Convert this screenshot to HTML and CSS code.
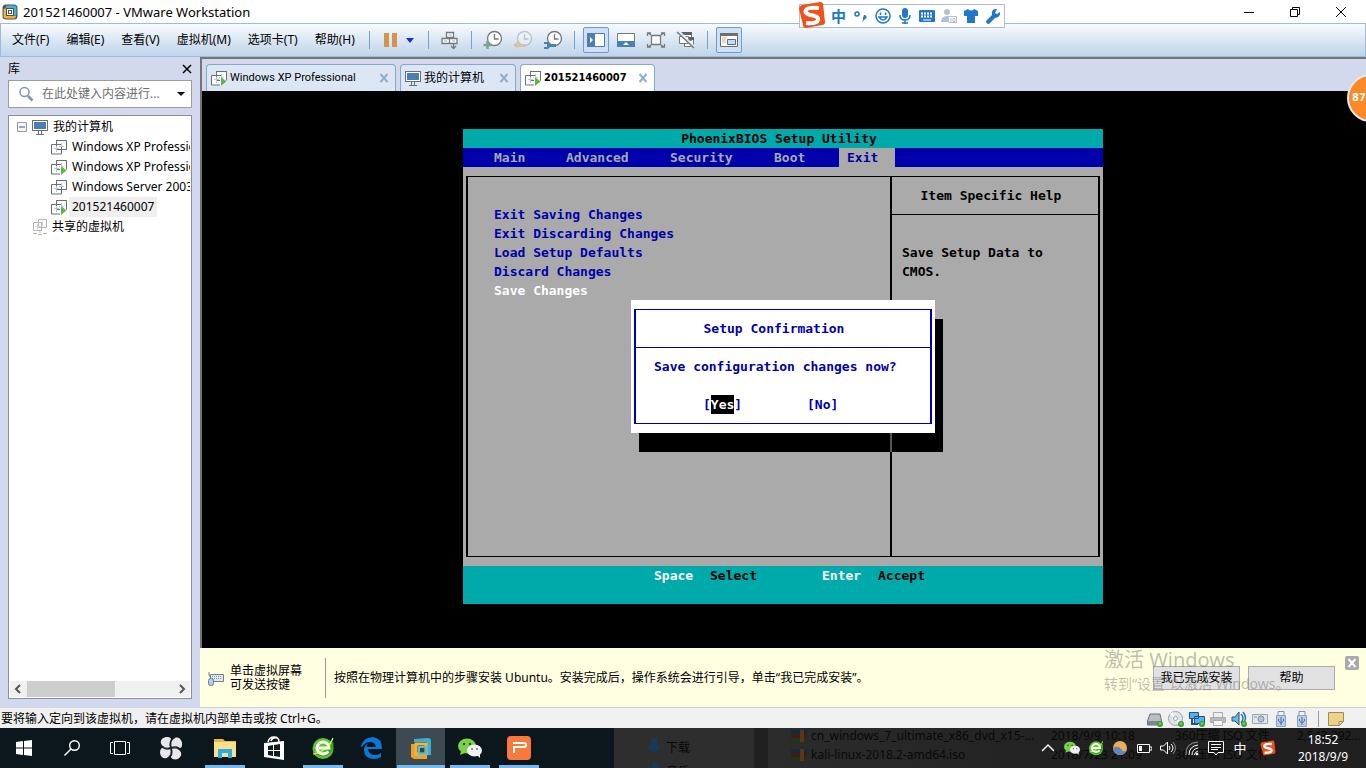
FILE: index.html
```html
<!DOCTYPE html>
<html lang="zh-CN">
<head>
<meta charset="utf-8">
<title>201521460007 - VMware Workstation</title>
<link rel="stylesheet" href="styles.css">
</head>
<body>
<svg class="defs" aria-hidden="true">
  <symbol id="vmlogo" viewBox="0 0 16 16">
    <rect x="0.5" y="0.5" width="15" height="15" rx="3.5" fill="#51504a"/>
    <path d="M5 1.500h7.500q2 0 2 2V11H12V5H3.500q0-3.500 1.500-3.500z" fill="#3fb5d6"/>
    <path d="M1.500 5.500Q1.500 4 4.500 4.500V11.500H14q0 3-2 3H4Q1.500 14.500 1.500 12z" fill="#efb13e"/>
    <rect x="4.500" y="4.500" width="7" height="7" fill="#fff" stroke="#51504a"/>
    <rect x="6.500" y="6.500" width="3" height="3" fill="#fff" stroke="#555"/>
  </symbol>
  <symbol id="vm" viewBox="0 0 16 16">
    <path d="M5.500 5V1.500h10v9H12M.500 5.500h10v9.500H.500z" fill="#fff" stroke="#6f6f6f"/>
    <path d="M5.500 10.500v-9h10v9z" fill="none" stroke="#6f6f6f"/>
    <path d="M5.500 7v6M3 9.500h5M8 7.500h5M10.500 4v4" stroke="#b3c5df" fill="none"/>
  </symbol>
  <symbol id="vmon" viewBox="0 0 16 16">
    <use href="#vm"/><path d="M9 6 16 11v1l-6 4H9z" fill="#fff"/><path d="M10 7v9l5.500-4.500z" fill="#57b947"/>
  </symbol>
  <symbol id="pc" viewBox="0 0 16 16">
    <rect x=".5" y="1.500" width="15" height="10" fill="#fff" stroke="#6f6f6f"/><rect x="2" y="3" width="12" height="7" fill="#4a7fb5"/>
    <path d="M6.500 12v3M9.500 12v3M4 15.500h8" stroke="#6f6f6f"/>
  </symbol>
  <symbol id="shared" viewBox="0 0 14 16">
    <path d="M5.500.5h8v8h-8zM.5 3.500h8v8h-8zM7 12v2M0 14.500h4M5 15.500h4M10 14.500h4" fill="none" stroke="#b5b5b5"/>
    <path d="M4.500 5v5M2.500 7.500h5M9.500 2.500v5" stroke="#ccd5e4"/>
  </symbol>
  <symbol id="x" viewBox="0 0 10 10"><path d="m1.500 1 7 8M8.500 1l-7 8" stroke="currentColor" stroke-width="2" fill="none"/></symbol>
  <symbol id="clock" viewBox="0 0 20 20">
    <circle cx="11.500" cy="8.500" r="7" fill="#fff" stroke="#77797b" stroke-width="1.400"/><path d="M11.500 4v5h4" fill="none" stroke="#77797b" stroke-width="1.400"/>
  </symbol>
  <symbol id="wechat" viewBox="0 0 24 20">
    <ellipse cx="9" cy="8" rx="9" ry="7.500" fill="#7bd149"/><path d="m3 13-1 4 5-2z" fill="#7bd149"/>
    <circle cx="6" cy="6" r="1.200" fill="#285a17"/><circle cx="12" cy="6" r="1.200" fill="#285a17"/>
    <ellipse cx="16.500" cy="12.500" rx="7.500" ry="6" fill="#f1f3f2"/><path d="m19 17 3 3v-4z" fill="#f1f3f2"/>
    <circle cx="14" cy="11" r="1" fill="#777"/><circle cx="19" cy="11" r="1" fill="#777"/>
  </symbol>
  <symbol id="green-e" viewBox="0 0 24 24">
    <circle cx="12" cy="12.500" r="10.500" fill="#5cc62b"/><path d="M3 17C9 20 18 15 22 5q2 7-3 13-7 6-16-1z" fill="#3fa31b"/>
    <path d="M17.500 15.500Q15 18 12 18a6 6 0 1 1 6-6H8" fill="none" stroke="#fff" stroke-width="3"/>
    <path d="M2 18C8 18 19 11 22 2" fill="none" stroke="#e3ff85" stroke-width="1.200"/>
  </symbol>
  <symbol id="sogou" viewBox="0 0 28 28">
    <path d="M4 4 22 1q3 0 3 2l2 18q0 3-3 3L8 27q-3 0-3-3L1 8q0-3 3-4z" fill="#f1501b"/>
    <path d="M21 7Q10 6 8 9t4 5q9 1 8 5t-12 3" fill="none" stroke="#fff" stroke-width="4"/>
  </symbol>
  <symbol id="dot" viewBox="0 0 6 6"><circle cx="3" cy="3" r="3" fill="#3c9d2e"/><circle cx="3" cy="2.500" r="1.500" fill="#6bcf50"/></symbol>
  <symbol id="usb" viewBox="0 0 12 16">
    <path d="M3 .5h6v4H3z" fill="#eef1f5" stroke="#8794a5"/><path d="M1.500 4.500h9v11h-9z" fill="#b9cce4" stroke="#8ea2bd"/>
    <path d="M6 6v8M3.500 8v2L6 12l2.500-2V8" fill="none" stroke="#456da0"/>
  </symbol>
  <symbol id="archive" viewBox="0 0 16 12">
    <path d="M0 0h16v4H0z" fill="#122c3e"/><path d="M0 4h16v4H0z" fill="#401c18"/><path d="M0 8h16v4H0z" fill="#1e3518"/><path d="M9 0h4v12H9z" fill="#54391d"/>
  </symbol>
</svg>

<header class="titlebar">
  <svg class="i16"><use href="#vmlogo"/></svg>
  <h1 class="title">201521460007 - VMware Workstation</h1>
  <div class="window-buttons">
    <button aria-label="最小化"><svg class="i12" viewBox="0 0 12 12"><path d="M1 6.500h10" stroke="#000"/></svg></button>
    <button aria-label="还原"><svg class="i12" viewBox="0 0 12 12" fill="none" stroke="#000"><path d="M1.500 3.500h7v7h-7zM3.500 3V1.500h7v7H9"/></svg></button>
    <button aria-label="关闭"><svg class="i12" viewBox="0 0 12 12"><path d="m1 1 10 10M11 1 1 11" stroke="#000"/></svg></button>
  </div>
</header>

<div class="menubar">
  <nav class="menus">
    <button>文件(F)</button><button>编辑(E)</button><button>查看(V)</button><button>虚拟机(M)</button><button>选项卡(T)</button><button>帮助(H)</button>
  </nav>
  <div class="tools">
    <span class="sep"></span>
    <button aria-label="挂起"><svg class="i20" viewBox="0 0 20 20"><path d="M3 3h5v14H3zM11 3h5v14h-5z" fill="#d3924d"/></svg></button>
    <button class="caret" aria-label="电源选项"><svg class="i8" viewBox="0 0 8 8"><path d="M0 2h8L4 7z" fill="#1c2ddb"/></svg></button>
    <span class="sep"></span>
    <button aria-label="发送 Ctrl+Alt+Del"><svg class="i20" viewBox="0 0 20 20" fill="#fff" stroke="#77797b" stroke-width="1.300"><path d="M6.500 2.500h7v5h-7zM2 8.500h7.500v5H2zM9.500 8.500H17v5H9.500z"/><path d="M4 11h3M12 11h3M8.500 5h3" stroke="#b5c9e6"/><path d="M13.500 14v4.500M11 16l2.500 2.500L16 16" fill="none"/></svg></button>
    <span class="sep"></span>
    <button aria-label="拍摄快照"><svg class="i20" viewBox="0 0 20 20"><use href="#clock"/><path d="M4.500 11v8M.5 15h8" stroke="#7da48c" stroke-width="2.500"/></svg></button>
    <button aria-label="恢复快照"><svg class="i20" viewBox="0 0 20 20"><g opacity=".35"><use href="#clock"/></g><path d="m0 15 5-4v3h8v3H5v2z" fill="#dcc0a1"/></svg></button>
    <button aria-label="管理快照"><svg class="i20" viewBox="0 0 20 20"><use href="#clock"/><path d="M1 12h4l2 2h6v3H7l-2 2H1v-2h3v-3H1z" fill="#4a7fb5"/></svg></button>
    <span class="sep"></span>
    <button class="on" aria-label="显示库"><svg class="i20" viewBox="0 0 20 20"><path d="M1.500 3.500h17v13h-17z" fill="#fff" stroke="#4f7fb0"/><path d="M1 3h8v14H1z" fill="#4a7fb5"/><path d="m4 7 3 3-3 3z" fill="#fff"/></svg></button>
    <button aria-label="显示缩略图"><svg class="i20" viewBox="0 0 20 20"><path d="M1.500 3.500h17v13h-17z" fill="#fff" stroke="#77797b"/><path d="M1 11h18v6H1z" fill="#4a7fb5"/><path d="m7 15 3-3 3 3z" fill="#fff"/></svg></button>
    <button aria-label="全屏"><svg class="i20" viewBox="0 0 20 20" fill="none" stroke="#77797b" stroke-width="1.300"><path d="M5.500 5.500h9v9h-9z" fill="#fff"/><path d="M1.500 6V3H5M15 3h3.500v3M1.500 14v3H5M15 17h3.500v-3M2 3l3 2M18 3l-3 2M2 17l3-2M18 17l-3-2"/></svg></button>
    <button aria-label="Unity"><svg class="i20" viewBox="0 0 20 20" fill="#fff" stroke="#77797b"><path d="M5.500 2.500h10v8h-10zM8.500 7.500h9v9h-9z"/><path d="M5 2h11v3H5zM13 7h5v3h-5z" fill="#5f6366" stroke="none"/><path d="M3.500 6.500h9v7h-9z"/><path d="m2 1 16 16" stroke="#e0eaf6" stroke-width="3"/><path d="m1 2 17 16" stroke-width="1.500"/></svg></button>
    <span class="sep"></span>
    <button class="on" aria-label="控制台视图"><svg class="i20" viewBox="0 0 20 20"><path d="M1.500 3.500h17v13h-17z" fill="#fff" stroke="#6f6f6f"/><path d="M1 3h18v3H1z" fill="#6f6f6f"/><path d="M3 8h4M3 10h4M3 12h4" stroke="#dcb36f"/><path d="M8.500 9.500h8v5h-8z" fill="#c9d9ee" stroke="#4f6f97"/></svg></button>
  </div>
</div>

<div class="workspace">
  <aside class="sidebar">
    <div class="side-head"><h2>库</h2><button aria-label="关闭库"><svg class="i10" viewBox="0 0 10 10"><path d="m1 1 8 8M9 1 1 9" stroke="#000" stroke-width="1.500"/></svg></button></div>
    <div class="search">
      <svg class="i16" viewBox="0 0 16 16" fill="none" stroke="#8093b9"><circle cx="6.500" cy="6" r="4.500" stroke-width="1.500"/><path d="m10 10 4.500 4.500" stroke-width="2.500"/></svg>
      <input type="text" aria-label="搜索库" placeholder="在此处键入内容进行...">
      <button aria-label="搜索选项"><svg class="i8" viewBox="0 0 8 8"><path d="M0 2h8L4 6z"/></svg></button>
    </div>
    <div class="tree-box">
      <ul class="tree">
        <li class="root"><svg class="i10" viewBox="0 0 10 10"><path d="M.5.5h9v9h-9z" fill="#f6f6f6" stroke="#9a9a9a"/><path d="M2 5h6" stroke="#3b53a0"/></svg><svg class="i16"><use href="#pc"/></svg><span>我的计算机</span></li>
        <li class="child"><svg class="i16"><use href="#vm"/></svg><span>Windows XP Professional</span></li>
        <li class="child"><svg class="i16"><use href="#vmon"/></svg><span>Windows XP Professional</span></li>
        <li class="child"><svg class="i16"><use href="#vm"/></svg><span>Windows Server 2003</span></li>
        <li class="child selected"><svg class="i16"><use href="#vmon"/></svg><span>201521460007</span></li>
        <li class="common"><svg class="i16"><use href="#shared"/></svg><span>共享的虚拟机</span></li>
      </ul>
      <div class="scrollbar">
        <svg class="i10" viewBox="0 0 10 10"><path d="M7 1 3 5l4 4" fill="none" stroke="#555" stroke-width="2"/></svg>
        <span class="track"><span class="thumb"></span></span>
        <svg class="i10" viewBox="0 0 10 10"><path d="m3 1 4 4-4 4" fill="none" stroke="#555" stroke-width="2"/></svg>
      </div>
    </div>
  </aside>

  <main class="main">
    <div class="tabs">
      <div class="tab tab-wide"><svg class="i16"><use href="#vmon"/></svg><span>Windows XP Professional</span><button aria-label="关闭选项卡"><svg class="i10"><use href="#x"/></svg></button></div>
      <div class="tab"><svg class="i16"><use href="#pc"/></svg><span class="cn">我的计算机</span><button aria-label="关闭选项卡"><svg class="i10"><use href="#x"/></svg></button></div>
      <div class="tab active"><svg class="i16"><use href="#vmon"/></svg><span>201521460007</span><button aria-label="关闭选项卡"><svg class="i10"><use href="#x"/></svg></button></div>
    </div>
    <div class="screen">
      <section class="bios">
        <h2 class="bios-title">PhoenixBIOS Setup Utility</h2>
        <nav class="bios-menu"><button>Main</button><button>Advanced</button><button>Security</button><button>Boot</button><button class="current">Exit</button></nav>
        <div class="bios-body">
          <div class="bios-frame">
            <ul class="bios-list"><li>Exit Saving Changes</li><li>Exit Discarding Changes</li><li>Load Setup Defaults</li><li>Discard Changes</li><li class="picked">Save Changes</li></ul>
            <div class="bios-help"><h3>Item Specific Help</h3><p>Save Setup Data to CMOS.</p></div>
          </div>
        </div>
        <footer class="bios-foot"><b>Space</b><span>Select</span><b>Enter</b><span>Accept</span></footer>
        <div class="dialog-shadow"><i></i></div>
        <div class="dialog" role="dialog" aria-labelledby="confirm">
          <div class="dialog-frame">
            <h3 id="confirm">Setup Confirmation</h3>
            <p>Save configuration changes now?</p>
            <div class="choices"><span>[<button class="yes">Yes</button>]</span><span>[<button>No</button>]</span></div>
          </div>
        </div>
      </section>
    </div>
    <div class="notice">
      <svg class="i16" viewBox="0 0 16 16"><path d="M2.500 4.500h13v7h-13z" fill="#dfe7ef" stroke="#73808c"/><path d="M4 6.500h10M4 8.500h10" stroke="#8a98a7" stroke-dasharray="1 1"/><rect x=".5" y="8.500" width="5" height="7" rx="2" fill="#b6cce4" stroke="#657d98"/><path d="M1 2v3l2 3" fill="none" stroke="#777"/></svg>
      <p class="hint">单击虚拟屏幕<br>可发送按键</p>
      <p class="message">按照在物理计算机中的步骤安装 Ubuntu。安装完成后，操作系统会进行引导，单击“我已完成安装”。</p>
      <button class="push">我已完成安装</button>
      <button class="push">帮助</button>
      <button class="dismiss" aria-label="关闭提示"><svg class="i10"><use href="#x"/></svg></button>
      <div class="watermark"><strong>激活 Windows</strong><span>转到“设置”以激活 Windows。</span></div>
    </div>
  </main>
</div>

<div class="status">
  <p>要将输入定向到该虚拟机，请在虚拟机内部单击或按 Ctrl+G。</p>
  <div class="devices">
    <svg class="i16" viewBox="0 0 16 16"><path d="m3 3-2.500 7v4h14v-4L13 3z" fill="#b9bec4" stroke="#686f77"/><path d="M1 10h14v4H1z" fill="#7d858f"/><use href="#dot" x="10" y="10" width="6" height="6"/></svg>
    <svg class="i16" viewBox="0 0 16 16"><circle cx="7.500" cy="7.500" r="7" fill="#dfe4e9" stroke="#98a0a8"/><path d="M7.500 7.500 2 3l3-2zM7.500 7.500l6 3-3 3z" fill="#fff"/><circle cx="7.500" cy="7.500" r="2" fill="#fff" stroke="#8aa2bb"/><use href="#dot" x="10" y="10" width="6" height="6"/></svg>
    <svg class="i16" viewBox="0 0 16 16"><path d="M.5 1.500h9v6h-9zM5.500 5.500h10v7h-10z" fill="#55b1ef" stroke="#1e5487"/><path d="M3 8v5h6" fill="none" stroke="#1e5487" stroke-width="2"/><use href="#dot" x="10" y="10" width="6" height="6"/></svg>
    <svg class="i16" viewBox="0 0 16 16"><path d="M3.500 1.500h9v5h-9z" fill="#eee" stroke="#aaa"/><path d="M.5 6.500h15v5H.5z" fill="#bbb" stroke="#aaa"/><path d="M3.500 9.500h9v5h-9z" fill="#f5f5f5" stroke="#aaa"/></svg>
    <svg class="i16" viewBox="0 0 16 16"><path d="M1 6h3l4-5v13L4 10H1z" fill="#6ab7eb" stroke="#29557d"/><path d="M10 3q4 4 0 9M12 1q5 6 0 12" fill="none" stroke="#2676b4" stroke-width="1.500"/><use href="#dot" x="10" y="10" width="6" height="6"/></svg>
    <svg class="i16" viewBox="0 0 16 16"><path d="M.5 3.500h15v9H.5z" fill="#e1e6ec" stroke="#9aa6b3"/><circle cx="9" cy="8" r="3" fill="#b4c2d2" stroke="#7d8fa5"/><path d="M2 6h3" stroke="#8998aa"/></svg>
    <svg class="i16"><use href="#usb"/></svg>
    <svg class="i16"><use href="#usb"/></svg>
    <span class="line"></span>
    <svg class="i16" viewBox="0 0 16 16"><path d="M.5 1.500h15v9l-4 4H.5z" fill="#edd28b" stroke="#a48a50"/><path d="M15 10.500h-4v4z" fill="#fff2c8" stroke="#a48a50"/></svg>
  </div>
</div>

<footer class="taskbar">
  <div class="ghost" aria-hidden="true">
    <div class="ghost-nav"><svg class="i16" viewBox="0 0 16 16"><path d="M5 0h6v8h5l-8 7-8-7h5z" fill="#173b56"/></svg><span>下载</span><svg class="i16" viewBox="0 0 16 16"><path d="M7 0h2l5 6h-4v8H5z" fill="#173b56"/></svg><span>音乐</span></div>
    <div class="ghost-files">
      <div><svg class="i16"><use href="#archive"/></svg><span>cn_windows_7_ultimate_x86_dvd_x15-...</span><span>2018/9/9 10:18</span><span>360压缩 ISO 文件</span><span>2,543,292...</span></div>
      <div><svg class="i16"><use href="#archive"/></svg><span>kali-linux-2018.2-amd64.iso</span><span>2018/7/23 21:09</span><span>360压缩 ISO 文件</span><span></span></div>
    </div>
  </div>
  <nav class="apps">
    <button class="sys" aria-label="开始"><svg class="i16" viewBox="0 0 16 16"><path d="m0 2 7-1v6.500H0zM8 1l8-1v7.500H8zM0 8.500h7V15l-7-1zM8 8.500h8V16l-8-1z" fill="#fff"/></svg></button>
    <button class="sys" aria-label="搜索"><svg class="i16" viewBox="0 0 16 16" fill="none" stroke="#fff" stroke-width="1.400"><circle cx="10.500" cy="5.500" r="4.800"/><path d="M7 9 .5 15.500"/></svg></button>
    <button class="sys" aria-label="任务视图"><svg class="i20" viewBox="0 0 20 20" fill="none" stroke="#fff"><path d="M4.500 3.500h11v13h-11zM3 4.500H.5v11H3M17 4.500h2.500v11H17"/></svg></button>
    <button class="app first" aria-label="风扇"><svg class="i24" viewBox="0 0 24 24"><g fill="#e8e8eb"><path d="M11 11.500C0 13-1 2 7 1q7-1 5 7zM12.500 11C11-1 22-1 23 7q1 7-7 5zM13 12.500c11-1 12 9 4 11q-7 0-5-7zM11.500 13C13 24 2 25 1 17q0-7 7-5z"/></g><path d="M1 8q4 7 11 4M16 1q-7 4-4 11M23 16q-4-7-11-4M8 23q7-4 4-11" fill="none" stroke="#182029" stroke-width="1.500"/></svg></button>
    <button class="app open" aria-label="文件资源管理器"><svg class="i24" viewBox="0 0 24 24"><path d="M1 3h9l2 2h11v16H1z" fill="#e9b548"/><path d="M1 6h22v15H1z" fill="#ffe08a"/><path d="M5 22v-9h14v9h-4v-5H9v5z" fill="#28aee8"/></svg></button>
    <button class="app" aria-label="应用商店"><svg class="i24" viewBox="0 0 24 24"><path d="m2 7 20-2v19L2 21z" fill="#fff"/><path d="M6 6q1-5 6-5t5 5M9 5q1-4 6-3" fill="none" stroke="#fff" stroke-width="1.500"/><path d="m6 10 5-1v5H6zM12 9l6-1v6h-6zM6 15h5v5l-5-1zM12 15h6v6l-6-1z" fill="#111d22"/></svg></button>
    <button class="app open" aria-label="360浏览器"><svg class="i24"><use href="#green-e"/></svg></button>
    <button class="app" aria-label="Edge"><svg class="i24" viewBox="0 0 24 24"><path d="M1 11Q3 1 13 1q9 1 9 12H8q1 6 7 6 4 0 6-2v4q-3 2-8 2-9-1-9-9 0-5 5-7-3 2-2 4h9q-1-5-6-5-5 0-8 5z" fill="#0a78d7"/></svg></button>
    <button class="app focused" aria-label="VMware Workstation"><svg class="i24" viewBox="0 0 24 24"><path d="M5 3 19 2q3 0 3 3v14h-4V6H5z" fill="#3eaed0"/><path d="M2 8h4v10h12v5H5l-3-2z" fill="#e8a32b"/><path d="M7 8h10v10H7z" fill="#41403e" stroke="#f0b53f" stroke-width="3"/><path d="M10 11h7v7h-7z" fill="none" stroke="#50c0db" stroke-width="2"/></svg></button>
    <button class="app open" aria-label="微信"><svg class="i24"><use href="#wechat"/></svg></button>
    <button class="app open" aria-label="WPS 演示"><svg class="i24" viewBox="0 0 24 24"><rect width="24" height="24" rx="4" fill="#f9793c"/><path d="M7 17v-6h10q2 0 2-2t-2-2H6" fill="none" stroke="#fff" stroke-width="2"/></svg></button>
  </nav>
  <div class="tray">
    <svg class="i16" viewBox="0 0 16 16"><path d="m2 11 6-6 6 6" fill="none" stroke="#fff" stroke-width="1.500"/></svg>
    <svg class="i16"><use href="#wechat"/></svg>
    <svg class="i16"><use href="#green-e"/></svg>
    <svg class="i16" viewBox="0 0 16 16"><circle cx="8" cy="8" r="7" fill="#e9ae58"/><path d="M1 8q5-3 8 1t6 1q-2 5-7 5-6 0-7-7z" fill="#6485bd"/></svg>
    <svg class="i16" viewBox="0 0 16 16"><path d="M1.500 4.500h12v8h-12zM14 7h2v3h-2" fill="none" stroke="#fff"/><path d="M3 6h3v5H3z" fill="#fff"/></svg>
    <svg class="i16" viewBox="0 0 16 16" fill="none" stroke="#fff"><path d="M.5 6h3l4-4v12l-4-4h-3z"/><path d="M9 6q2 2 0 4M11 4q4 4 0 8"/><path d="M13 2q5 6 0 12" stroke="#888"/></svg>
    <svg class="i16" viewBox="0 0 16 16" fill="none" stroke="#fff"><path d="M8 15q0-6 6-7M5 15Q5 6 14 5M10.500 15q0-3 3.500-4"/><path d="M2 15Q1 3 14 2" stroke="#999"/><circle cx="13" cy="14" r="1" fill="#fff"/></svg>
    <svg class="i16" viewBox="0 0 16 16"><path d="M.5 1.500h15v11H10L8 15l-2-2.500H.5zM3 4.500h10M3 7.500h10M3 9.500h7" fill="none" stroke="#fff"/></svg>
    <span class="ime">中</span>
    <svg class="i16"><use href="#sogou"/></svg>
    <time>18:52<br>2018/9/9</time>
  </div>
</footer>

<div class="ime-bar">
  <svg class="ime-logo"><use href="#sogou"/></svg>
  <span>中</span>
  <svg class="i16" viewBox="0 0 16 16"><circle cx="4" cy="6" r="2" fill="none" stroke="#2277c8" stroke-width="1.500"/><path d="M11 7a2 2 0 1 1 1 4q-1 2-3 3 2-2 1-4z" fill="#2277c8"/></svg>
  <svg class="i16" viewBox="0 0 16 16" fill="none" stroke="#2277c8" stroke-width="1.500"><circle cx="8" cy="8" r="7"/><path d="M4 9q4 6 8 0zM5.500 4.500V7M10.500 4.500V7"/></svg>
  <svg class="i16" viewBox="0 0 16 16"><rect x="5" y="0" width="6" height="10" rx="3" fill="#2277c8"/><path d="M3 7q0 5 5 5t5-5M8 12v4M5 15h6" fill="none" stroke="#2277c8" stroke-width="1.500"/></svg>
  <svg class="i16" viewBox="0 0 16 16"><rect y="2" width="16" height="12" rx="1" fill="#2277c8"/><path d="M2 5.500h12M2 8.500h12" stroke="#fff" stroke-width="2" stroke-dasharray="2 1"/><path d="M4 12h8" stroke="#fff"/></svg>
  <svg class="i16" viewBox="0 0 16 16"><circle cx="6" cy="4" r="3" fill="#b4bfd8"/><path d="M0 14q0-6 6-6t6 6z" fill="#b4bfd8"/><path d="M7.500 8.500h8v6h-8z" fill="#fff" stroke="#b4bfd8"/><path d="M10 10v4M12 10.500h2v3h-2z" fill="none" stroke="#b4bfd8"/></svg>
  <svg class="i16" viewBox="0 0 16 16"><path d="m1 3 4-2q3 3 6 0l4 2v5h-3v7H4V8H1z" fill="#2277c8"/></svg>
  <svg class="i16" viewBox="0 0 16 16"><path d="m1 13 6-6q-1-5 3-6l2 0-2 4 2 1 3-2q1 5-5 6l-6 6q-3 0-3-3z" fill="#2277c8"/></svg>
</div>
<div class="speed">87</div>
</body>
</html>
```

FILE: styles.css
```css
* { box-sizing: border-box; }
body { margin: 0; height: 100vh; display: flex; flex-direction: column; position: relative; overflow: hidden; background: #fff; color: #000; font: 12px/20px "Noto Sans", "Noto Sans CJK SC", sans-serif; }
button { font: inherit; color: inherit; background: none; border: 0; padding: 0; }
h1, h2, h3, p, ul { margin: 0; padding: 0; font-size: inherit; font-weight: inherit; }
ul { list-style: none; }
svg { display: block; flex: none; }
.defs { position: absolute; width: 0; height: 0; }
.i8 { width: 8px; height: 8px; }
.i10 { width: 10px; height: 10px; }
.i12 { width: 12px; height: 12px; }
.i16 { width: 16px; height: 16px; }
.i20 { width: 20px; height: 20px; }
.i24 { width: 24px; height: 24px; }

.titlebar { flex: none; height: 23px; display: flex; align-items: center; gap: 5px; padding: 0 2px; }
.title { flex: 1; font-size: 13px; }
.window-buttons { display: flex; }
.window-buttons button { width: 46px; height: 24px; display: grid; place-items: center; }

.menubar { flex: none; height: 34px; display: flex; border: 1px solid #9dbcdd; background: linear-gradient(#f9fbfd, #dbe7f4 50%, #bfd4ea); }
.menus { min-width: 368px; display: flex; gap: 17px; padding-left: 11px; align-items: center; white-space: nowrap; }
.tools { display: flex; align-items: center; }
.tools button { width: 30px; height: 26px; display: grid; place-items: center; }
.tools .caret { width: 16px; justify-items: start; }
.tools .on { width: 26px; margin: 0 2px; border: 1px solid #6e9bd0; border-radius: 2px; background: #cfe0f6; }
.tools .sep { width: 1px; height: 18px; background: #7ba0cc; margin-right: 6px; }
.tools button + .sep { margin-left: 6px; }

.workspace { flex: 1; min-height: 0; display: flex; background: #d3d9ed; }
.sidebar { flex: none; width: 200px; padding: 1px 8px 9px; display: flex; flex-direction: column; }
.side-head { height: 22px; display: flex; justify-content: space-between; align-items: center; }
.side-head button { display: grid; }
.search { height: 28px; display: flex; align-items: center; border: 1px solid #9c9c9c; background: #fff; padding: 0 6px 0 9px; }
.search input { flex: 1; min-width: 0; border: 0; outline: 0; padding: 0 0 0 8px; font: inherit; color: #6d6d6d; }
.search input::placeholder { color: #6d6d6d; opacity: 1; }
.tree-box { flex: 1; margin-top: 7px; border: 1px solid #8a8fa0; background: #fff; display: flex; flex-direction: column; justify-content: space-between; overflow: hidden; padding: 1px; }
.tree { overflow: hidden; white-space: nowrap; }
.tree li { display: flex; align-items: center; height: 20px; }
.root { gap: 5px; padding-left: 7px; }
.child { gap: 2px; padding-left: 41px; }
.child span { padding: 0 3px; }
.selected span { background: #efefef; }
.common { gap: 4px; padding-left: 22px; }
.scrollbar { display: flex; align-items: center; gap: 4px; height: 16px; padding: 0 3px; background: #f0f0f0; }
.track { flex: 1; height: 100%; }
.thumb { display: block; width: 60%; height: 100%; background: #cdcdcd; }

.main { flex: 1; min-width: 0; display: flex; flex-direction: column; border-top: 2px solid #747474; }
.tabs { flex: none; height: 32px; padding: 5px 0 0 4px; display: flex; gap: 4px; border-left: 2px solid #747474; }
.tab { min-width: 116px; display: flex; align-items: center; gap: 3px; padding: 0 6px 0 4px; border: 1px solid #86a9c9; border-bottom: 0; border-radius: 4px 4px 0 0; background: #dce7f5; font-size: 11px; font-family: Roboto, "Noto Sans CJK SC", sans-serif; }
.tab .cn { font-size: 12px; }
.tab-wide { width: 190px; }
.tab button { margin-left: auto; color: #8fb0cd; }
.tab.active { min-width: 135px; background: #fff; font: bold 11px/20px "DejaVu Sans Condensed", "DejaVu Sans", sans-serif; }
.screen { flex: 1; min-height: 0; display: grid; place-items: center; padding: 0 2px 6px 0; background: #000; border-left: 2px solid #747474; }

.bios { position: relative; width: 640px; background: #aaa; font: bold 13px/19px "DejaVu Sans Mono", monospace; }
.bios-title { background: #0aa; text-align: center; padding-right: 8px; }
.bios-menu { display: grid; grid-template-columns: 72px 104px 104px 65px 56px; padding-left: 31px; background: #00a; color: #aaa; }
.bios-menu button { text-align: left; }
.bios-menu .current { background: #aaa; color: #00a; padding-left: 8px; }
.bios-body { padding: 9px 3px; }
.bios-frame { display: flex; min-height: 381px; border: solid #000; border-width: 1px 2px; }
.bios-list { flex: 1; padding: 28px 0 0 26px; color: #00a; }
.picked { color: #fff; }
.bios-help { width: 208px; border-left: 2px solid #000; }
.bios-help h3 { padding: 9px 8px 9px 0; border-bottom: 1px solid #000; text-align: center; }
.bios-help p { padding: 28px 10px; }
.bios-foot { display: grid; grid-template-columns: 56px 112px 56px 80px; height: 38px; padding-left: 191px; background: #0aa; }
.bios-foot b { color: #fff; }
.dialog { position: absolute; left: 168px; top: 171px; width: 304px; padding: 9px 3px; background: #fff; color: #00a; }
.dialog-shadow { position: absolute; left: 176px; top: 190px; width: 304px; height: 133px; padding-left: 251px; background: #000; }
.dialog-shadow i { display: block; width: 2px; height: 100%; background: #555; }
.dialog-frame { border: solid #00a; border-width: 1px 2px; }
.dialog h3 { padding: 9px 18px 9px 0; text-align: center; border-bottom: 1px solid #00a; }
.dialog p { padding: 9px 18px 19px; }
.choices { display: grid; grid-template-columns: 104px 80px; padding: 0 0 9px 67px; }
.choices .yes { background: #000; color: #fff; }

.notice { position: relative; flex: none; height: 60px; display: flex; align-items: center; padding: 0 7px 0 8px; background: #ffffe1; border-bottom: 1px solid #d0d0d0; }
.hint { width: 96px; margin: 0 8px 0 6px; border-right: 1px solid #9a9a9a; line-height: 14px; padding: 6px 0; }
.message { flex: 1; }
.push { width: 87px; height: 24px; margin-right: 8px; border: 1px solid #adadad; background: #e1e1e1; }
.dismiss { align-self: flex-start; width: 14px; height: 14px; margin: 8px 0 0 2px; display: grid; place-items: center; background: #a9a9a9; color: #fff; border-radius: 2px; }
.watermark { position: absolute; right: 16px; top: 0; width: 246px; color: rgba(110, 110, 110, .45); pointer-events: none; }
.watermark strong { display: block; font-size: 20px; line-height: 24px; font-weight: normal; }
.watermark span { display: block; font-size: 14px; line-height: 24px; }

.status { flex: none; height: 20px; display: flex; align-items: center; justify-content: space-between; padding: 2px 22px 0 1px; background: #f0f0f0; }
.devices { display: flex; align-items: center; gap: 5px; }
.line { width: 1px; height: 16px; margin: 0 4px 0 3px; background: #999; }

.taskbar { position: relative; flex: none; height: 40px; display: flex; justify-content: space-between; background: #0b161d; color: #fff; overflow: hidden; }
.ghost { position: absolute; inset: 0 0 0 614px; display: flex; background: #222; color: #080808; white-space: nowrap; }
.ghost-nav { width: 154px; padding: 10px 0 0 32px; display: grid; grid-template-columns: 16px 60px; gap: 4px; align-content: start; background: #2e2e2e; border-right: 14px solid #202020; }
.ghost-files { flex: 1; padding-left: 23px; background: linear-gradient(90deg, #2c2c2c, #202020 60%); }
.ghost-files div { display: grid; grid-template-columns: 16px 236px 120px 118px 1fr; gap: 4px; align-items: center; height: 20px; line-height: 16px; }
.ghost-files div:first-child { height: 14px; }
.ghost-files div + div { height: 26px; }
.apps { position: relative; display: flex; }
.apps button { display: grid; place-items: center; height: 40px; }
.sys { width: 48px; }
.app { width: 49px; }
.apps .first { width: 53px; margin-right: 3px; }
.open { background: linear-gradient(#76b9ed, #76b9ed) center bottom / 40px 3px no-repeat; }
.focused { background: linear-gradient(#76b9ed, #76b9ed) center bottom / 48px 3px no-repeat, #3d4a52; }
.tray { position: relative; display: flex; align-items: center; gap: 8px; padding-right: 16px; }
.ime { width: 16px; margin-right: 4px; font-size: 13px; text-align: center; }
.tray time { width: 54px; margin-left: 12px; text-align: center; line-height: 17px; }

.ime-bar { position: absolute; left: 799px; top: 4px; width: 206px; height: 24px; display: flex; align-items: center; gap: 6px; padding-left: 31px; border: 1px solid #aebdd5; background: #fff; color: #2277c8; font-weight: bold; font-size: 15px; }
.ime-bar span { width: 16px; }
.ime-logo { position: absolute; left: -2px; top: -4px; width: 28px; height: 28px; }
.speed { position: absolute; right: -29px; top: 74px; width: 48px; height: 48px; padding-left: 3px; border: 2px solid #e6e6ee; border-radius: 50%; background: #fb8a25; color: #fff; font: bold 11px/44px "DejaVu Sans Condensed", sans-serif; }
```
